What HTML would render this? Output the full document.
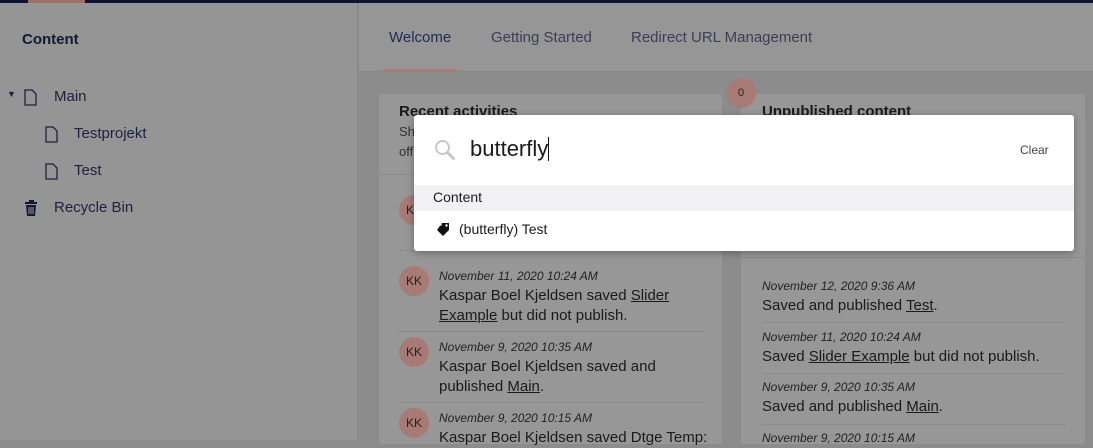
<!DOCTYPE html>
<html><head><meta charset="utf-8"><style>
*{margin:0;padding:0;box-sizing:border-box}
body{width:1093px;height:440px;overflow:hidden;background:#8c8c8c;font-family:"Liberation Sans",sans-serif;position:relative;color:#111;}
.top{position:absolute;left:0;top:0;width:1093px;height:3px;background:#0f1530}
.top i{position:absolute;left:28px;width:57px;height:3px;background:#9e6e68}
.side{position:absolute;left:0;top:3px;width:358px;height:437px;background:#959595;border-right:1px solid #868686}
.side h1{position:absolute;left:22px;top:28px;font-size:15px;font-weight:bold;color:#111a33}
.tree div{position:absolute;font-size:15px;color:#1b2240}
.hdr{position:absolute;left:359px;top:3px;width:734px;height:69px;background:#969696;border-bottom:1px solid #888}
.hdr span{position:absolute;top:26px;font-size:15px;color:#3a3f55}
.card{position:absolute;background:#979797;border-radius:3px}
.a{position:absolute;font-size:15px;color:#1a1a1a;line-height:20px}
.d{font-size:12px;font-style:italic;color:#222}
.kk{position:absolute;width:30px;height:30px;border-radius:50%;background:#a77a75;font-size:12px;color:#222;text-align:center;line-height:30px}
.sep{position:absolute;height:1px;background:#8a8a8a}
u{text-decoration:underline}
.modal{position:absolute;left:414px;top:115px;width:660px;height:136px;background:#fff;border-radius:3px;box-shadow:0 2px 8px rgba(0,0,0,.3)}
</style></head><body>
<div class="top"><i></i></div>
<div class="side"><h1>Content</h1>
<div class="tree">
<div style="left:7px;top:86px;font-size:9px">▼</div>
<svg style="position:absolute;left:24px;top:86px" width="13" height="17" viewBox="0 0 13 17"><path d="M1 1h7l4 4v11H1z" fill="none" stroke="#1b2240" stroke-width="1.3"/></svg>
<div style="left:54px;top:85px">Main</div>
<svg style="position:absolute;left:45px;top:123px" width="13" height="17" viewBox="0 0 13 17"><path d="M1 1h7l4 4v11H1z" fill="none" stroke="#1b2240" stroke-width="1.3"/></svg>
<div style="left:74px;top:122px">Testprojekt</div>
<svg style="position:absolute;left:45px;top:160px" width="13" height="17" viewBox="0 0 13 17"><path d="M1 1h7l4 4v11H1z" fill="none" stroke="#1b2240" stroke-width="1.3"/></svg>
<div style="left:74px;top:159px">Test</div>
<svg style="position:absolute;left:24px;top:197px" width="14" height="17" viewBox="0 0 14 17"><path d="M1 3h12M5 1h4v2" stroke="#111a33" stroke-width="2" fill="none"/><path d="M2 5h10l-1 11H3z" fill="#111a33"/><path d="M5 7v7M7 7v7M9 7v7" stroke="#959595" stroke-width="1"/></svg>
<div style="left:54px;top:196px">Recycle Bin</div>
</div></div>
<div class="hdr">
<span style="left:30px;color:#1f2a55">Welcome</span>
<div style="position:absolute;left:24px;top:66px;width:74px;height:3px;background:#a77a75"></div>
<span style="left:132px">Getting Started</span>
<span style="left:272px">Redirect URL Management</span>
</div>
<div class="card" style="left:379px;top:94px;width:343px;height:350px"></div>
<div class="card" style="left:741px;top:94px;width:344px;height:350px"></div>
<div style="position:absolute;left:726px;top:78px;width:30px;height:30px;border-radius:50%;background:#a77a75;font-size:11px;text-align:center;line-height:30px;color:#222">0</div>
<div class="a" style="left:399px;top:102px;font-weight:bold">Recent activities</div>
<div class="a" style="left:762px;top:102px;font-weight:bold">Unpublished content</div>
<div class="a" style="left:399px;top:122px;font-size:13px;color:#333">Sh<br>off</div>
<div class="sep" style="left:379px;top:174px;width:343px"></div>
<div class="kk" style="left:399px;top:195px">KK</div>
<div class="sep" style="left:399px;top:250px;width:305px"></div>
<div class="kk" style="left:399px;top:266px">KK</div>
<div class="a" style="left:439px;top:266px"><span class="d">November 11, 2020 10:24 AM</span><br>Kaspar Boel Kjeldsen saved <u>Slider</u><br><u>Example</u> but did not publish.</div>
<div class="sep" style="left:399px;top:331px;width:305px"></div>
<div class="kk" style="left:399px;top:337px">KK</div>
<div class="a" style="left:439px;top:337px"><span class="d">November 9, 2020 10:35 AM</span><br>Kaspar Boel Kjeldsen saved and<br>published <u>Main</u>.</div>
<div class="sep" style="left:399px;top:402px;width:305px"></div>
<div class="kk" style="left:399px;top:408px">KK</div>
<div class="a" style="left:439px;top:408px"><span class="d">November 9, 2020 10:15 AM</span><br>Kaspar Boel Kjeldsen saved Dtge Temp:</div>
<div class="sep" style="left:741px;top:257px;width:344px"></div>
<div class="a" style="left:762px;top:276px"><span class="d">November 12, 2020 9:36 AM</span><br>Saved and published <u>Test</u>.</div>
<div class="sep" style="left:762px;top:322px;width:305px"></div>
<div class="a" style="left:762px;top:327px"><span class="d">November 11, 2020 10:24 AM</span><br>Saved <u>Slider Example</u> but did not publish.</div>
<div class="sep" style="left:762px;top:373px;width:305px"></div>
<div class="a" style="left:762px;top:377px"><span class="d">November 9, 2020 10:35 AM</span><br>Saved and published <u>Main</u>.</div>
<div class="sep" style="left:762px;top:424px;width:305px"></div>
<div class="a" style="left:762px;top:428px"><span class="d">November 9, 2020 10:15 AM</span></div>
<div class="modal">
<svg style="position:absolute;left:20px;top:24px" width="22" height="22" viewBox="0 0 22 22"><circle cx="8.5" cy="8.5" r="6.5" fill="none" stroke="#c8c8c8" stroke-width="2"/><path d="M13.5 13.5l6 6" stroke="#c8c8c8" stroke-width="3" stroke-linecap="round"/></svg>
<div style="position:absolute;left:56px;top:21px;font-size:22px;color:#1b1b1b">butterfly<span style="display:inline-block;width:1px;height:24px;background:#111;vertical-align:-5px"></span></div>
<div style="position:absolute;left:606px;top:28px;font-size:12px;color:#444">Clear</div>
<div style="position:absolute;left:0;top:70px;width:660px;height:26px;background:#f2f2f4"></div>
<div style="position:absolute;left:19px;top:74px;font-size:14px;color:#1b1b1b">Content</div>
<svg style="position:absolute;left:22px;top:107px" width="15" height="15" viewBox="0 0 15 15"><path d="M6 1h7v7l-6 6-6-6z" fill="#111"/><path d="M4 3h2" stroke="#fff"/><circle cx="10.5" cy="3.5" r="1.2" fill="#fff"/></svg>
<div style="position:absolute;left:45px;top:106px;font-size:14px;color:#1b1b1b">(butterfly) Test</div>
</div>
</body></html>
